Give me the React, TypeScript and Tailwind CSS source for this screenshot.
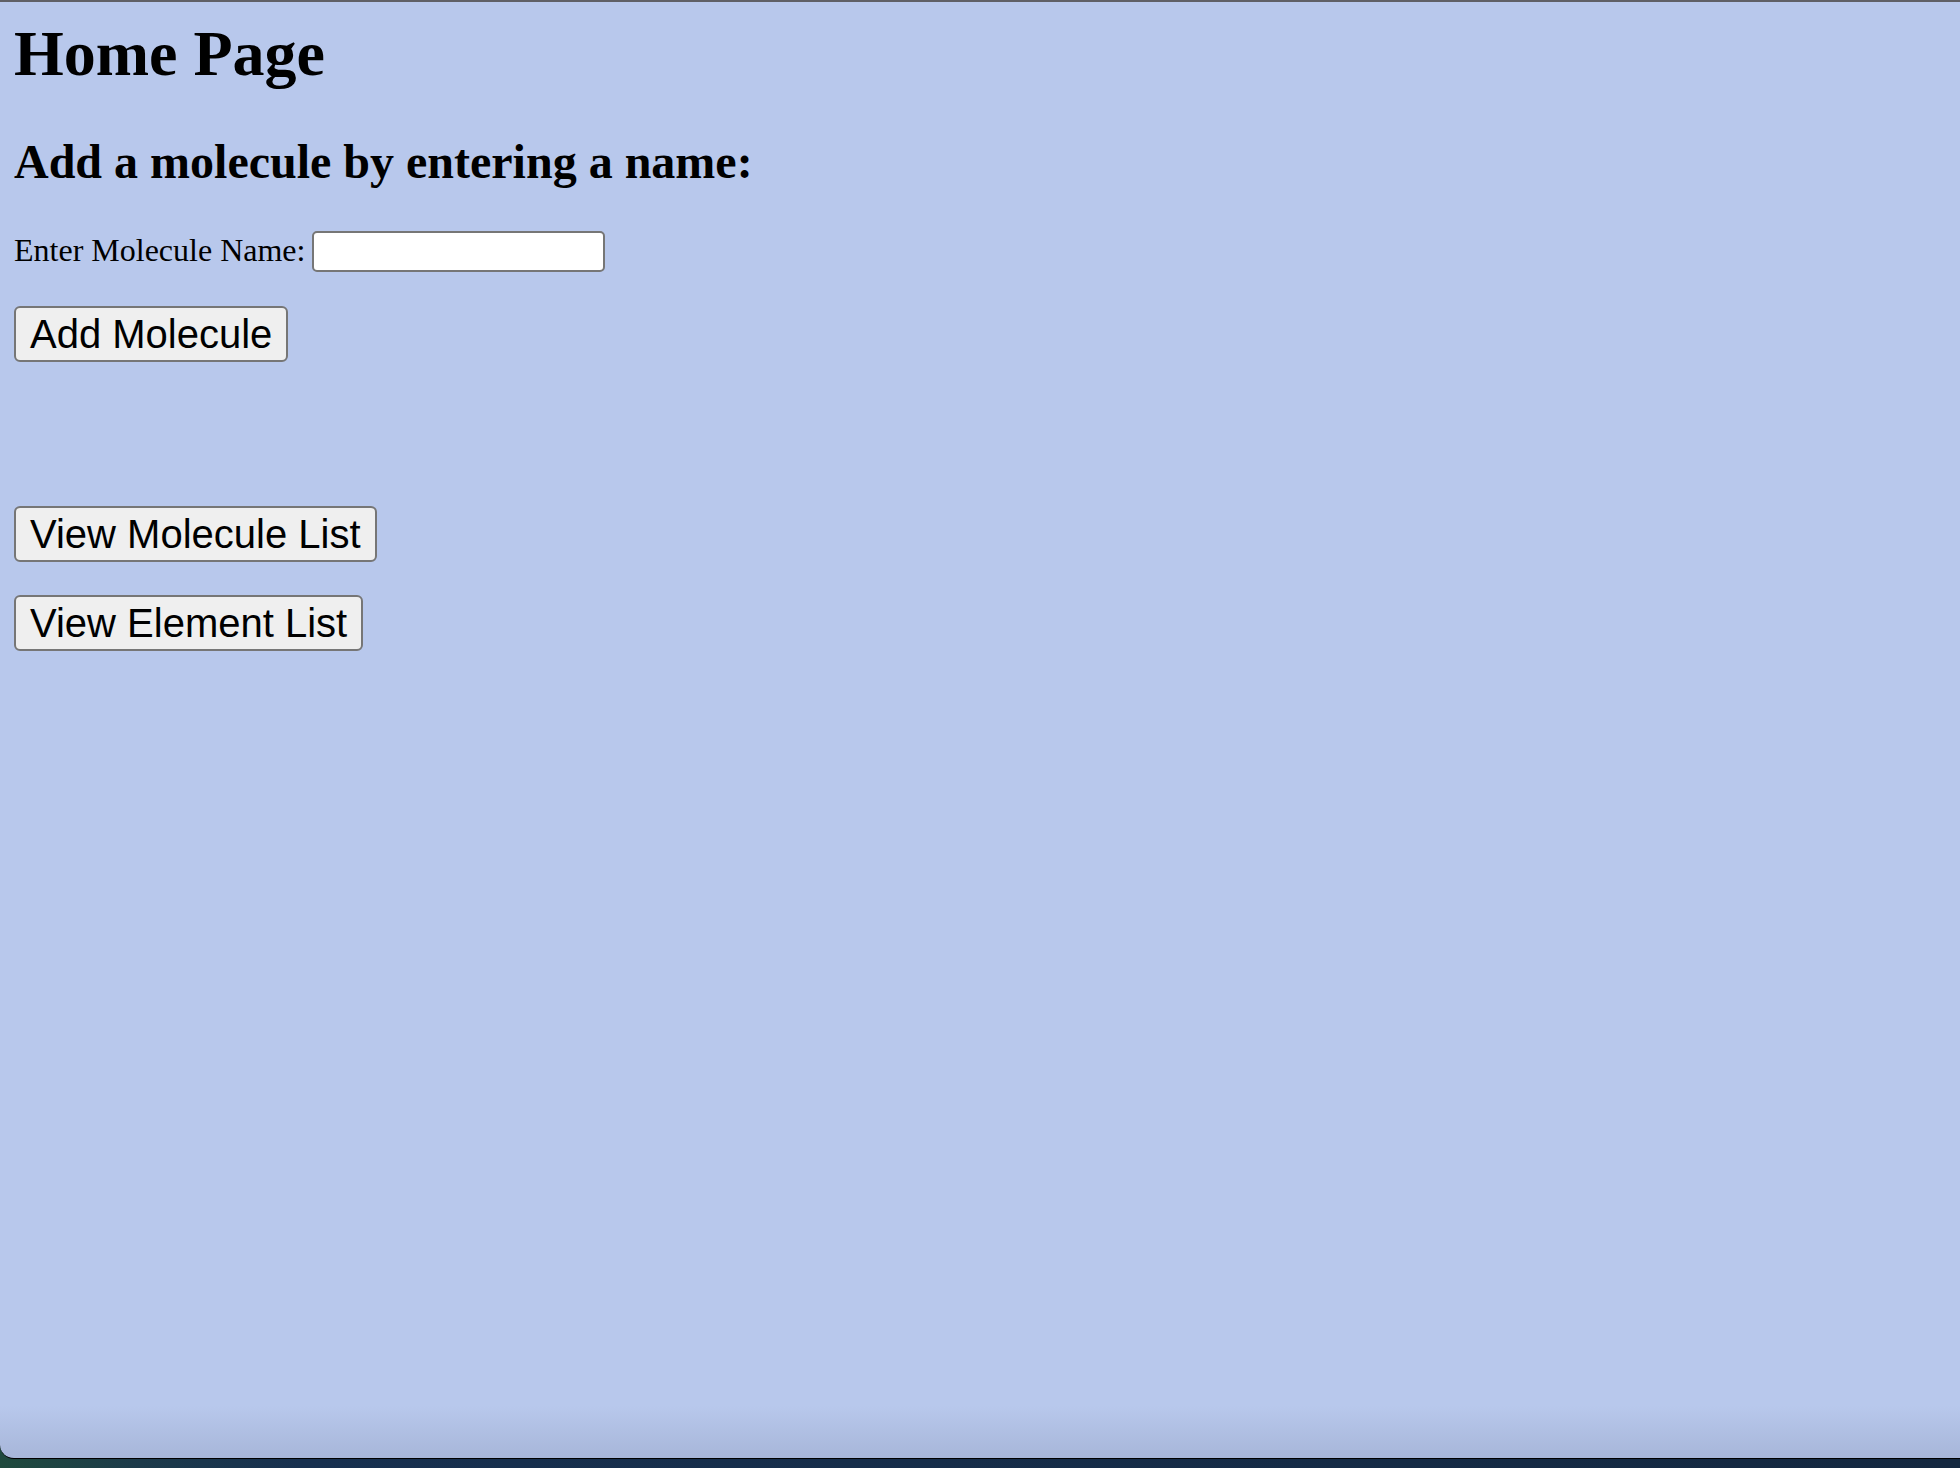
export default function App() {
  const buttonClass =
    "h-[56px] rounded-[6px] border-2 border-[#767676] bg-[#efefef] px-[14px] font-['Liberation_Sans',Arial,sans-serif] text-[40px] leading-[46px] text-black";

  return (
    <div className="flex h-[1468px] w-[1960px] flex-col bg-[linear-gradient(to_right,#1f4a3d_0px,#1c3a4a_140px,#17304f_300px,#142840)]">
      {/* window top edge */}
      <div className="h-[2px] w-full bg-[#5f6066]" />

      {/* page */}
      <div className="flex h-[1457px] flex-col rounded-bl-[14px] border-b border-black bg-[linear-gradient(to_bottom,#b8c8ec_96.4%,#a7b6d9)] pl-[14px] text-black">
        <h1 className="mt-[16px] font-['Liberation_Serif','Times_New_Roman',serif] text-[64px] font-bold leading-[71px]">
          Home Page
        </h1>

        <h2 className="mt-[46px] font-['Liberation_Serif','Times_New_Roman',serif] text-[48px] font-bold leading-[53px]">
          Add a molecule by entering a name:
        </h2>

        <div className="mt-[43px] flex items-start gap-[7px]">
          <label className="mt-[2px] font-['Liberation_Serif','Times_New_Roman',serif] text-[32px] leading-[35px]">
            Enter Molecule Name:
          </label>
          <input
            type="text"
            className="h-[41px] w-[293px] rounded-[5px] border-2 border-[#767676] bg-white px-[4px] outline-none"
          />
        </div>

        <div className="mt-[34px]">
          <button className={buttonClass}>Add Molecule</button>
        </div>

        <div className="mt-[144px]">
          <button className={buttonClass}>View Molecule List</button>
        </div>

        <div className="mt-[33px]">
          <button className={buttonClass}>View Element List</button>
        </div>
      </div>
    </div>
  );
}
